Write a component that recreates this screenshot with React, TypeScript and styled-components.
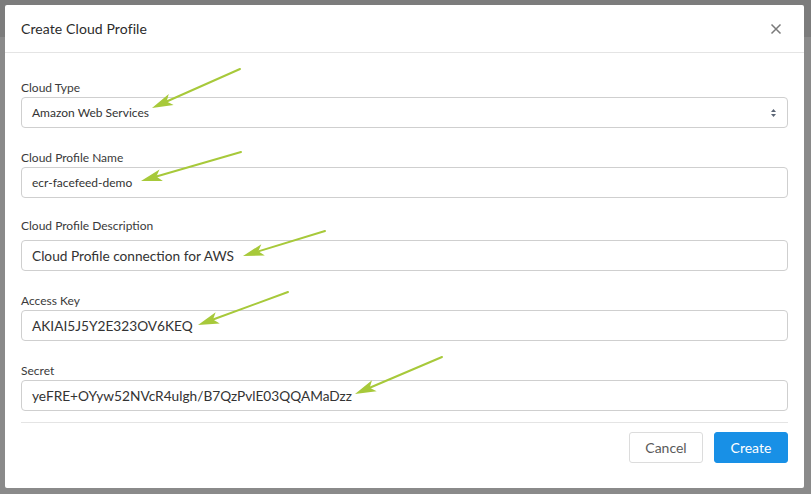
import React from "react";
import styled, { createGlobalStyle } from "styled-components";

const Global = createGlobalStyle`
  html, body { margin: 0; padding: 0; }
  body {
    width: 811px;
    height: 494px;
    overflow: hidden;
    background: #808080;
    font-family: Lato, "Open Sans", sans-serif;
  }
`;

const Backdrop = styled.div`
  position: relative;
  width: 811px;
  height: 494px;
  padding: 5px 7px 6px 5px;
  box-sizing: border-box;
  background: linear-gradient(#7c7c7c 0 37px, #8a8a8a 37px);
`;

const Modal = styled.div`
  position: relative;
  background: #fff;
  border-radius: 2px;
  display: flex;
  flex-direction: column;
  height: 100%;
  box-sizing: border-box;
`;

const Header = styled.div`
  height: 47px;
  border-bottom: 1px solid #e4e4e4;
  display: flex;
  align-items: center;
  justify-content: space-between;
  padding: 0 16px 0 16px;
`;

const Title = styled.h1`
  margin: 0;
  font-size: 14px;
  font-weight: 400;
  color: #2b2b2b;
  letter-spacing: 0.1px;
`;

const Close = styled.button`
  border: 0;
  background: none;
  padding: 0;
  width: 12px;
  height: 12px;
  margin-right: 6px;
  display: flex;
  cursor: pointer;
`;

const Body = styled.div`
  padding: 28px 16px 0 16px;
  display: flex;
  flex-direction: column;
  gap: 23px;
`;

const Group = styled.div<{ $pullUp?: number }>`
  display: flex;
  flex-direction: column;
  margin-top: ${(p) => -(p.$pullUp ?? 0)}px;
`;

const Label = styled.label<{ $gap?: number }>`
  font-size: 12px;
  line-height: 14px;
  color: #3a3a3a;
  margin-bottom: ${(p) => p.$gap ?? 2}px;
`;

const Field = styled.div<{ $small?: boolean }>`
  height: 31px;
  box-sizing: border-box;
  border: 1px solid #cfcfcf;
  border-radius: 4px;
  display: flex;
  align-items: center;
  justify-content: space-between;
  padding: 0 10px;
  font-size: ${(p) => (p.$small ? 12 : 13.7)}px;
  color: #333;
`;

const Footer = styled.div`
  margin: 11px 16px 0 16px;
  border-top: 1px solid #e4e4e4;
  padding-top: 9px;
  display: flex;
  justify-content: flex-end;
  gap: 11px;
`;

const Button = styled.button<{ $primary?: boolean }>`
  height: 31px;
  min-width: 74px;
  padding: 0 14px;
  box-sizing: border-box;
  border-radius: 3px;
  font-family: inherit;
  font-size: 14px;
  border: 1px solid ${(p) => (p.$primary ? "#1890e6" : "#dcdcdc")};
  background: ${(p) => (p.$primary ? "#1890e6" : "#fff")};
  color: ${(p) => (p.$primary ? "#fff" : "#5a5a5a")};
`;

const ArrowLayer = styled.svg`
  position: absolute;
  left: 0;
  top: 0;
  width: 811px;
  height: 494px;
  pointer-events: none;
`;

type Arrow = [number, number, number, number];
const arrows: Arrow[] = [
  [240, 69, 152, 108],
  [241, 152, 141, 181],
  [325, 231, 243, 256],
  [288, 292, 198, 325],
  [442, 357, 355, 394],
];

function ArrowShape({ a }: { a: Arrow }) {
  const [x1, y1, x2, y2] = a;
  const dx = x2 - x1;
  const dy = y2 - y1;
  const len = Math.hypot(dx, dy);
  const ux = dx / len;
  const uy = dy / len;
  const px = -uy;
  const py = ux;
  const hl = 21;
  const hw = 6;
  const bx = x2 - ux * hl;
  const by = y2 - uy * hl;
  const nx = x2 - ux * (hl - 5);
  const ny = y2 - uy * (hl - 5);
  const pts = `${x2},${y2} ${bx + px * hw},${by + py * hw} ${nx},${ny} ${bx - px * hw},${by - py * hw}`;
  return (
    <g>
      <line x1={x1} y1={y1} x2={nx} y2={ny} stroke="#a7c93a" strokeWidth={2} strokeLinecap="round" />
      <polygon points={pts} fill="#a7c93a" />
    </g>
  );
}

const SelectChevron = () => (
  <svg width="7" height="10" viewBox="0 0 7 10">
    <path d="M3.5 1 L6 4 H1 Z" fill="#5b6575" />
    <path d="M3.5 9 L6 6 H1 Z" fill="#5b6575" />
  </svg>
);

export default function App() {
  return (
    <>
      <Global />
      <Backdrop>
        <Modal>
          <Header>
            <Title>Create Cloud Profile</Title>
            <Close aria-label="close">
              <svg width="12" height="12" viewBox="0 0 12 12">
                <path d="M1.5 1.5 L10.5 10.5 M10.5 1.5 L1.5 10.5" stroke="#7a7a7a" strokeWidth="1.5" />
              </svg>
            </Close>
          </Header>
          <Body>
            <Group>
              <Label>Cloud Type</Label>
              <Field $small>
                <span>Amazon Web Services</span>
                <SelectChevron />
              </Field>
            </Group>
            <Group>
              <Label>Cloud Profile Name</Label>
              <Field $small>ecr-facefeed-demo</Field>
            </Group>
            <Group $pullUp={2}>
              <Label $gap={7}>Cloud Profile Description</Label>
              <Field>Cloud Profile connection for AWS</Field>
            </Group>
            <Group>
              <Label>Access Key</Label>
              <Field>AKIAI5J5Y2E323OV6KEQ</Field>
            </Group>
            <Group>
              <Label>Secret</Label>
              <Field>yeFRE+OYyw52NVcR4ulgh/B7QzPvlE03QQAMaDzz</Field>
            </Group>
          </Body>
          <Footer>
            <Button>Cancel</Button>
            <Button $primary>Create</Button>
          </Footer>
        </Modal>
        <ArrowLayer viewBox="0 0 811 494">
          {arrows.map((a, i) => (
            <ArrowShape key={i} a={a} />
          ))}
        </ArrowLayer>
      </Backdrop>
    </>
  );
}
